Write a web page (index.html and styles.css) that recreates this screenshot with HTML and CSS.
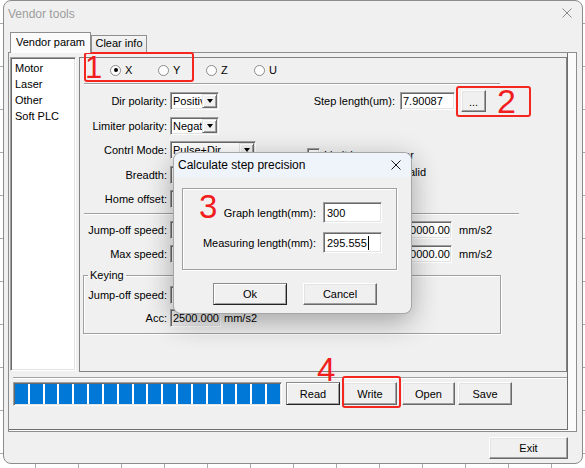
FILE: index.html
```html
<!DOCTYPE html>
<html>
<head>
<meta charset="utf-8">
<title>Vendor tools</title>
<link rel="stylesheet" href="styles.css">
</head>
<body>
<div class="window">
  <div class="titlebar">
    <span class="title">Vendor tools</span>
    <svg class="wclose" width="10" height="10" viewBox="0 0 10 10"><path d="M0.5 0.5L9.5 9.5M9.5 0.5L0.5 9.5" stroke="#8a8a8a" stroke-width="1" fill="none"/></svg>
  </div>
  <div class="tabctl">
    <div class="tabstrip">
      <div class="tab active">Vendor param</div>
      <div class="tab">Clear info</div>
    </div>
    <div class="page">
      <div class="child">
        <div class="mainrow">
          <ul class="listbox sunken">
            <li>Motor</li>
            <li>Laser</li>
            <li>Other</li>
            <li>Soft PLC</li>
          </ul>
          <div class="panel">
            <div class="radios">
              <span class="ropt"><span class="radio on"></span>X</span>
              <span class="ropt"><span class="radio"></span>Y</span>
              <span class="ropt"><span class="radio"></span>Z</span>
              <span class="ropt"><span class="radio"></span>U</span>
            </div>
            <div class="etch sep1"></div>
            <div class="form">
              <span class="lbl">Dir polarity:</span>
              <div class="combo w49"><span class="ctext">Positive</span><span class="drop"></span></div>
              <div class="step">
                <span class="rlbl">Step length(um):</span>
                <span class="field sunken tb-step">7.90087</span>
                <span class="btn dots">...</span>
              </div>
              <span class="lbl">Limiter polarity:</span>
              <div class="combo w49"><span class="ctext">Negative</span><span class="drop"></span></div>
              <span class="lbl">Contrl Mode:</span>
              <div class="combo w86"><span class="ctext">Pulse+Dir</span><span class="drop"></span></div>
              <div class="check">
                <span class="cbox sunken"></span>
                <span class="clbl">Limit home sensor<br>Limit switch is invalid</span>
              </div>
              <span class="lbl">Breadth:</span>
              <span class="field sunken w80"></span>
              <span class="lbl">Home offset:</span>
              <span class="field sunken w80"></span>
            </div>
            <div class="etch sep2"></div>
            <div class="speed">
              <div class="srow">
                <span class="lbl">Jump-off speed:</span>
                <span class="field sunken w80"></span>
                <span class="mid"></span>
                <span class="field sunken w51">10000.00</span>
                <span class="unit">mm/s2</span>
              </div>
              <div class="srow">
                <span class="lbl">Max speed:</span>
                <span class="field sunken w80"></span>
                <span class="mid"></span>
                <span class="field sunken w51">10000.00</span>
                <span class="unit">mm/s2</span>
              </div>
            </div>
            <fieldset class="group">
              <legend>Keying</legend>
              <div class="grow">
                <span class="glbl">Jump-off speed:</span>
                <span class="field sunken w51"></span>
              </div>
              <div class="grow">
                <span class="glbl">Acc:</span>
                <span class="field sunken w51 dis">2500.000</span>
                <span class="unit">mm/s2</span>
              </div>
            </fieldset>
          </div>
        </div>
        <div class="etch sep3"></div>
        <div class="actions">
          <div class="progress sunken">
            <i></i><i></i><i></i><i></i><i></i><i></i><i></i><i></i><i></i>
            <i></i><i></i><i></i><i></i><i></i><i></i><i></i><i></i><i></i>
          </div>
          <span class="btn abtn def b-read">Read</span>
          <span class="btn abtn b-write">Write</span>
          <span class="btn abtn b-open">Open</span>
          <span class="btn abtn b-save">Save</span>
        </div>
      </div>
    </div>
  </div>
  <div class="footer">
    <span class="btn exit">Exit</span>
  </div>
</div>

<div class="dialog">
  <div class="dtitle">
    <span>Calculate step precision</span>
    <svg width="10" height="10" viewBox="0 0 10 10"><path d="M0.5 0.5L9.5 9.5M9.5 0.5L0.5 9.5" stroke="#1a1a1a" stroke-width="1" fill="none"/></svg>
  </div>
  <div class="dgroup">
    <div class="drow"><span class="dlbl">Graph length(mm):</span><span class="field sunken dtb">300</span></div>
    <div class="drow"><span class="dlbl">Measuring length(mm):</span><span class="field sunken dtb">295.555<span class="caret"></span></span></div>
  </div>
  <div class="dbtns">
    <span class="btn dbtn def">Ok</span>
    <span class="btn dbtn">Cancel</span>
  </div>
</div>

<div class="mark box1"></div>
<div class="mark box2"></div>
<div class="mark box4"></div>
<span class="num n1">1</span>
<span class="num n2">2</span>
<span class="num n3">3</span>
<span class="num n4">4</span>
</body>
</html>
```

FILE: styles.css
```css
* { box-sizing: border-box; }
html, body { margin: 0; padding: 0; }
body {
  width: 585px;
  height: 468px;
  overflow: hidden;
  position: relative;
  background-color: #fff;
  background-image:
    linear-gradient(to right, #a9a9a9 1px, transparent 1px),
    linear-gradient(to bottom, #a9a9a9 1px, transparent 1px);
  background-size: 43px 43px;
  background-position: 35px 23px;
  font-family: "Liberation Sans", Arial, sans-serif;
  font-size: 11px;
  color: #000;
}

.sunken {
  background: #fff;
  border: 1px solid;
  border-color: #a0a0a0 #fff #fff #a0a0a0;
  box-shadow: inset 1px 1px 0 #696969, inset -1px -1px 0 #e3e3e3;
}
.etch {
  height: 2px;
  border-top: 1px solid #a0a0a0;
  border-bottom: 1px solid #fff;
}
.btn {
  display: inline-flex;
  align-items: center;
  justify-content: center;
  background: #f0f0f0;
  border: 1px solid;
  border-color: #fff #696969 #696969 #fff;
  box-shadow: inset -1px -1px 0 #a0a0a0, inset 1px 1px 0 #e3e3e3;
  flex: none;
}
.btn.def {
  border-color: #8a8a8a #222 #222 #8a8a8a;
  box-shadow: inset 1px 1px 0 #fff, inset -1px -1px 0 #a0a0a0;
}

/* window */
.window {
  margin-left: 3px;
  width: 580px;
  height: 464px;
  border: 1px solid #8c8c8c;
  border-radius: 8px;
  background: #f0f0f0;
}
.titlebar {
  height: 31px;
  display: flex;
  justify-content: space-between;
  align-items: flex-start;
  padding: 5px 10px 0 4px;
}
.title { font-size: 12px; line-height: 16px; color: #9d9d9d; }
.wclose { margin-top: 2px; }

/* tabs */
.tabctl { margin-left: 4px; width: 569px; }
.tabstrip {
  height: 20px;
  display: flex;
  align-items: flex-end;
  padding-left: 2px;
}
.tab {
  height: 17px;
  width: 56px;
  border: 1px solid #8e8e8e;
  border-bottom: none;
  background: linear-gradient(#f4f4f4, #e6e6e6);
  text-align: center;
  line-height: 14px;
  white-space: nowrap;
}
.tab.active {
  width: 81px;
  height: 21px;
  margin-bottom: -1px;
  line-height: 18px;
  background: #fbfbfb;
  position: relative;
  z-index: 1;
}
.page {
  width: 569px;
  height: 380px;
  border: 1px solid #8e8e8e;
  background: #fbfbfb;
}
.child {
  width: 559px;
  height: 377px;
  background: #f0f0f0;
  border-right: 1px solid #6e6e6e;
  border-bottom: 1px solid #6e6e6e;
}
.mainrow {
  display: flex;
  gap: 3px;
  padding: 4px 0 0 1px;
}
.listbox {
  margin: 0;
  padding: 2px 0 0 4px;
  width: 66px;
  height: 314px;
  list-style: none;
  line-height: 16px;
}
.listbox li { white-space: nowrap; }
.panel {
  width: 488px;
  height: 315px;
  border: 1px solid #828282;
}

/* radios */
.radios {
  display: flex;
  height: 16px;
  margin-top: 4px;
  padding-left: 30px;
}
.ropt {
  width: 48px;
  display: flex;
  align-items: center;
  gap: 4px;
}
.radio {
  width: 11px;
  height: 11px;
  border-radius: 50%;
  border: 1px solid #8a8a8a;
  background: #fff;
  display: flex;
  align-items: center;
  justify-content: center;
}
.radio.on::after {
  content: "";
  width: 4px;
  height: 4px;
  border-radius: 50%;
  background: #000;
}
.sep1 { margin: 5px 0 0 4px; width: 416px; }
.sep2 { margin: 5px 0 0 4px; width: 435px; }

/* form */
.form {
  margin-top: 7px;
  display: grid;
  grid-template-columns: 87px 134px 1fr;
  grid-auto-rows: 18px;
  column-gap: 3px;
  row-gap: 6.5px;
  align-items: center;
}
.lbl { grid-column: 1; text-align: right; white-space: nowrap; }
.combo {
  display: flex;
  height: 18px;
  background: #fff;
  border: 1px solid;
  border-color: #a0a0a0 #fff #fff #a0a0a0;
  box-shadow: inset 1px 1px 0 #696969, inset -1px -1px 0 #e3e3e3;
  padding: 1px 1px 1px 1px;
  justify-self: start;
}
.w49 { width: 49px; }
.w86 { width: 86px; }
.ctext {
  flex: 1;
  overflow: hidden;
  white-space: nowrap;
  padding-left: 1px;
  line-height: 14px;
}
.drop {
  width: 15px;
  flex: none;
  background: #f0f0f0;
  border: 1px solid;
  border-color: #e3e3e3 #696969 #696969 #e3e3e3;
  box-shadow: inset 1px 1px 0 #fff, inset -1px -1px 0 #a0a0a0;
  display: flex;
  align-items: center;
  justify-content: center;
}
.drop::after {
  content: "";
  border-left: 3.5px solid transparent;
  border-right: 3.5px solid transparent;
  border-top: 4px solid #000;
}
.field {
  display: block;
  height: 18px;
  line-height: 16px;
  padding-left: 2px;
  white-space: nowrap;
  overflow: hidden;
  justify-self: start;
  flex: none;
}
.w80 { width: 80px; }
.w51 { width: 51px; }
.field.dis { background: #f0f0f0; }
.step {
  grid-column: 3;
  display: flex;
  align-items: center;
  height: 18px;
}
.rlbl { width: 88px; text-align: right; white-space: nowrap; }
.tb-step { width: 55px; margin-left: 5px; }
.dots {
  width: 25px;
  height: 22px;
  margin-left: 6px;
  line-height: 14px;
  padding-top: 2px;
}
.check {
  grid-column: 3;
  grid-row: span 2;
  align-self: start;
  display: flex;
  align-items: flex-start;
  gap: 4px;
  margin-top: 5.5px;
  line-height: 17px;
  white-space: nowrap;
}
.cbox { width: 13px; height: 13px; margin-top: 1.5px; flex: none; }

/* speeds */
.speed {
  margin-top: 6px;
  display: flex;
  flex-direction: column;
  gap: 6px;
}
.srow {
  display: flex;
  align-items: center;
  height: 18px;
}
.srow .lbl { width: 87px; }
.srow .w80 { margin-left: 3px; }
.mid { width: 147px; flex: none; }
.srow .w51 { margin-left: 4px; }
.srow .unit { margin-left: 7px; }

.group {
  margin: 6px 0 0 3px;
  padding: 4px 0 6px 0;
  width: 418px;
  border: 1px solid #a0a0a0;
  box-shadow: inset 1px 1px 0 #fff, 1px 1px 0 #fff;
  display: flex;
  flex-direction: column;
  gap: 5px;
  min-width: 0;
}
.group legend {
  padding: 0 2px;
  margin-left: 4px;
  line-height: 13px;
}
.grow {
  display: flex;
  align-items: center;
  height: 18px;
}
.glbl { width: 83px; text-align: right; white-space: nowrap; }
.grow .field { margin-left: 3px; }
.grow .unit { margin-left: 3px; }

/* bottom */
.sep3 { margin: 5px 0 0 4px; }
.actions {
  display: flex;
  align-items: flex-start;
  margin-top: 3px;
  padding-left: 4px;
}
.progress {
  width: 269px;
  height: 24px;
  padding: 1px;
  display: grid;
  grid-template-columns: repeat(18, 1fr);
  column-gap: 2px;
}
.progress i { background: #0078d7; }
.abtn { width: 54px; height: 23px; }
.b-read { margin-left: 4px; }
.b-write { margin-left: 3px; }
.b-open { margin-left: 5px; width: 53px; }
.b-save { margin-left: 3px; }

.footer {
  display: flex;
  justify-content: flex-end;
  padding-right: 14px;
  margin-top: 5px;
}
.exit { width: 79px; height: 22px; }

/* dialog */
.dialog {
  position: absolute;
  left: 173px;
  top: 152px;
  width: 239px;
  height: 162px;
  border: 1px solid rgba(0, 0, 0, 0.3);
  border-radius: 8px;
  background: #f0f0f0;
  box-shadow: 0 8px 28px rgba(0, 0, 0, 0.32);
  overflow: hidden;
}
.dtitle {
  height: 24px;
  background: #eff3fa;
  display: flex;
  justify-content: space-between;
  align-items: center;
  padding: 0 10px 0 4px;
  font-size: 12px;
}
.dgroup {
  margin: 11px 0 0 8px;
  width: 215px;
  height: 82px;
  border: 1px solid #a0a0a0;
  box-shadow: inset 1px 1px 0 #fff, 1px 1px 0 #fff;
  padding-top: 13px;
  display: flex;
  flex-direction: column;
  gap: 9px;
}
.drow { display: flex; align-items: center; height: 21px; }
.dlbl { width: 133px; text-align: right; white-space: nowrap; }
.dtb {
  width: 59px;
  height: 21px;
  margin-left: 7px;
  line-height: 18px;
  padding-left: 3px;
  display: flex;
  align-items: center;
}
.caret {
  width: 1px;
  height: 14px;
  background: #000;
  margin-left: 1px;
}
.dbtns {
  display: flex;
  gap: 16px;
  margin-top: 13px;
  padding-left: 39px;
}
.dbtn { width: 74px; height: 22px; }

/* annotations */
.mark {
  position: absolute;
  border: 2px solid #f4261f;
  border-radius: 3px;
}
.box1 { left: 84px; top: 52px; width: 110px; height: 30px; }
.box2 { left: 456px; top: 86px; width: 75px; height: 31px; }
.box4 { left: 342px; top: 376px; width: 59px; height: 32px; }
.num {
  position: absolute;
  color: #f21d1d;
  line-height: 1;
  font-family: "Liberation Sans", Arial, sans-serif;
}
.n1 { left: 85px; top: 52px; font-size: 31px; }
.n2 { left: 497px; top: 84px; font-size: 34px; }
.n3 { left: 199px; top: 190px; font-size: 33px; }
.n4 { left: 317px; top: 353px; font-size: 33px; }
```
